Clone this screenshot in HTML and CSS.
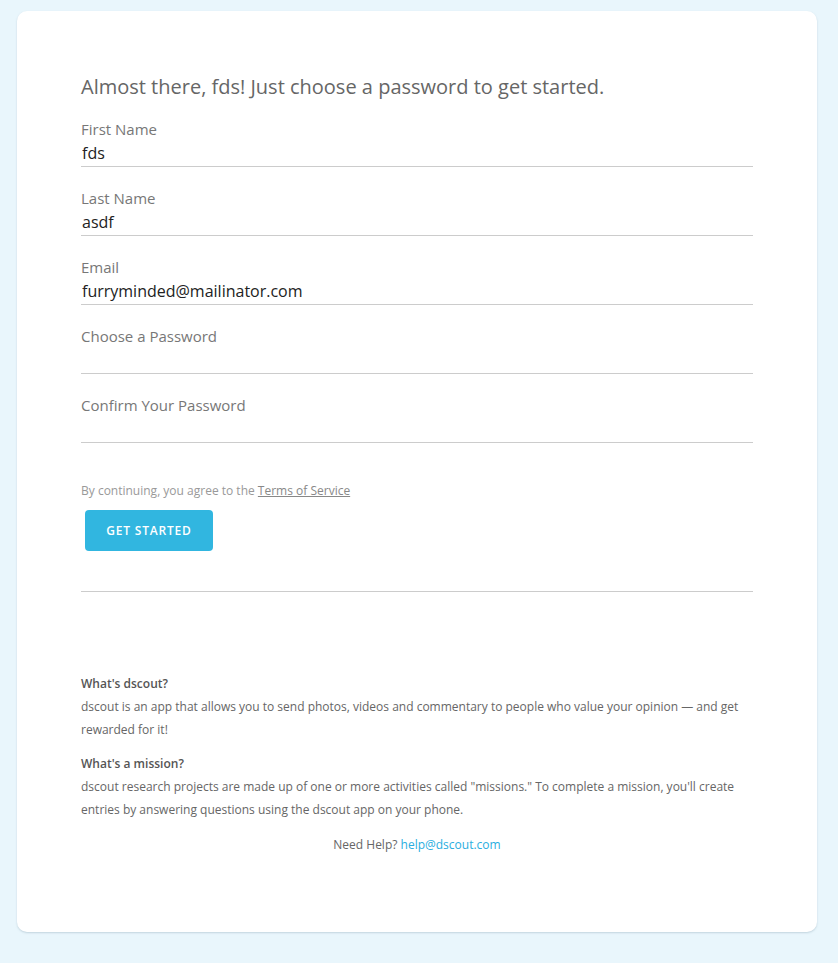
FILE: index.html
```html
<!DOCTYPE html>
<html>
<head>
<meta charset="utf-8">
<title>dscout - Get Started</title>
<link rel="stylesheet" href="styles.css">
</head>
<body>
<div class="card">
	<h1 class="title">Almost there, fds! Just choose a password to get started.</h1>
	<form class="signup">
		<div class="field">
			<label for="first">First Name</label>
			<input id="first" type="text" value="fds">
		</div>
		<div class="field">
			<label for="last">Last Name</label>
			<input id="last" type="text" value="asdf">
		</div>
		<div class="field">
			<label for="email">Email</label>
			<input id="email" type="text" value="furryminded@mailinator.com">
		</div>
		<div class="field">
			<label for="pass">Choose a Password</label>
			<input id="pass" type="password">
		</div>
		<div class="field">
			<label for="pass2">Confirm Your Password</label>
			<input id="pass2" type="password">
		</div>
		<p class="terms">By continuing, you agree to the <a href="#">Terms of Service</a></p>
		<button type="button" class="btn">GET STARTED</button>
	</form>
	<div class="faq">
		<h4>What's dscout?</h4>
		<p>dscout is an app that allows you to send photos, videos and commentary to people who value your opinion &mdash; and get rewarded for it!</p>
		<h4 class="second">What's a mission?</h4>
		<p>dscout research projects are made up of one or more activities called "missions." To complete a mission, you'll create entries by answering questions using the dscout app on your phone.</p>
		<div class="help">Need Help? <a href="#">help@dscout.com</a></div>
	</div>
</div>
</body>
</html>
```

FILE: styles.css
```css
body {
	margin: 0;
	padding: 11px 0 40px 17px;
	background-color: #e9f6fc;
	font-family: "Open Sans", "Noto Sans", sans-serif;
	color: #666;
}

.card {
	width: 800px;
	box-sizing: border-box;
	padding: 64px 64px 76px 64px;
	background-color: #fff;
	border-radius: 10px;
	box-shadow: 0 1px 2px rgba(120, 150, 165, 0.35);
}

.title {
	margin: 0;
	font-size: 20px;
	font-weight: 400;
	line-height: 23px;
	color: #666;
}

.signup {
	border-bottom: 1px solid #ccc;
	padding-bottom: 40px;
}

.field {
	margin-top: 20px;
	border-bottom: 1px solid #ccc;
}

.field label {
	display: block;
	font-size: 15px;
	line-height: 22px;
	color: #777;
}

.field input {
	display: block;
	width: 100%;
	height: 26px;
	box-sizing: border-box;
	margin: 0;
	padding: 0 1px;
	border: none;
	outline: none;
	background: transparent;
	font-family: "Open Sans", "Noto Sans", sans-serif;
	font-size: 16px;
	color: #222;
}

.terms {
	margin: 39px 0 10px 0;
	font-size: 12px;
	line-height: 18px;
	color: #999;
}

.terms a {
	color: #888;
	text-decoration: underline;
}

.btn {
	margin-left: 4px;
	width: 128px;
	height: 41px;
	border: none;
	border-radius: 4px;
	background-color: #31b6e0;
	color: #fff;
	font-family: "Open Sans", "Noto Sans", sans-serif;
	font-size: 12px;
	font-weight: 600;
	letter-spacing: 0.8px;
}

.faq {
	margin-top: 80px;
	font-size: 12px;
	line-height: 23px;
	color: #666;
}

.faq h4 {
	margin: 0;
	font-size: 12px;
	font-weight: 600;
	color: #555;
}

.faq h4.second {
	margin-top: 11px;
}

.faq p {
	margin: 0;
}

.help {
	margin-top: 12px;
	text-align: center;
}

.help a {
	color: #2aaee0;
	text-decoration: none;
}
```
